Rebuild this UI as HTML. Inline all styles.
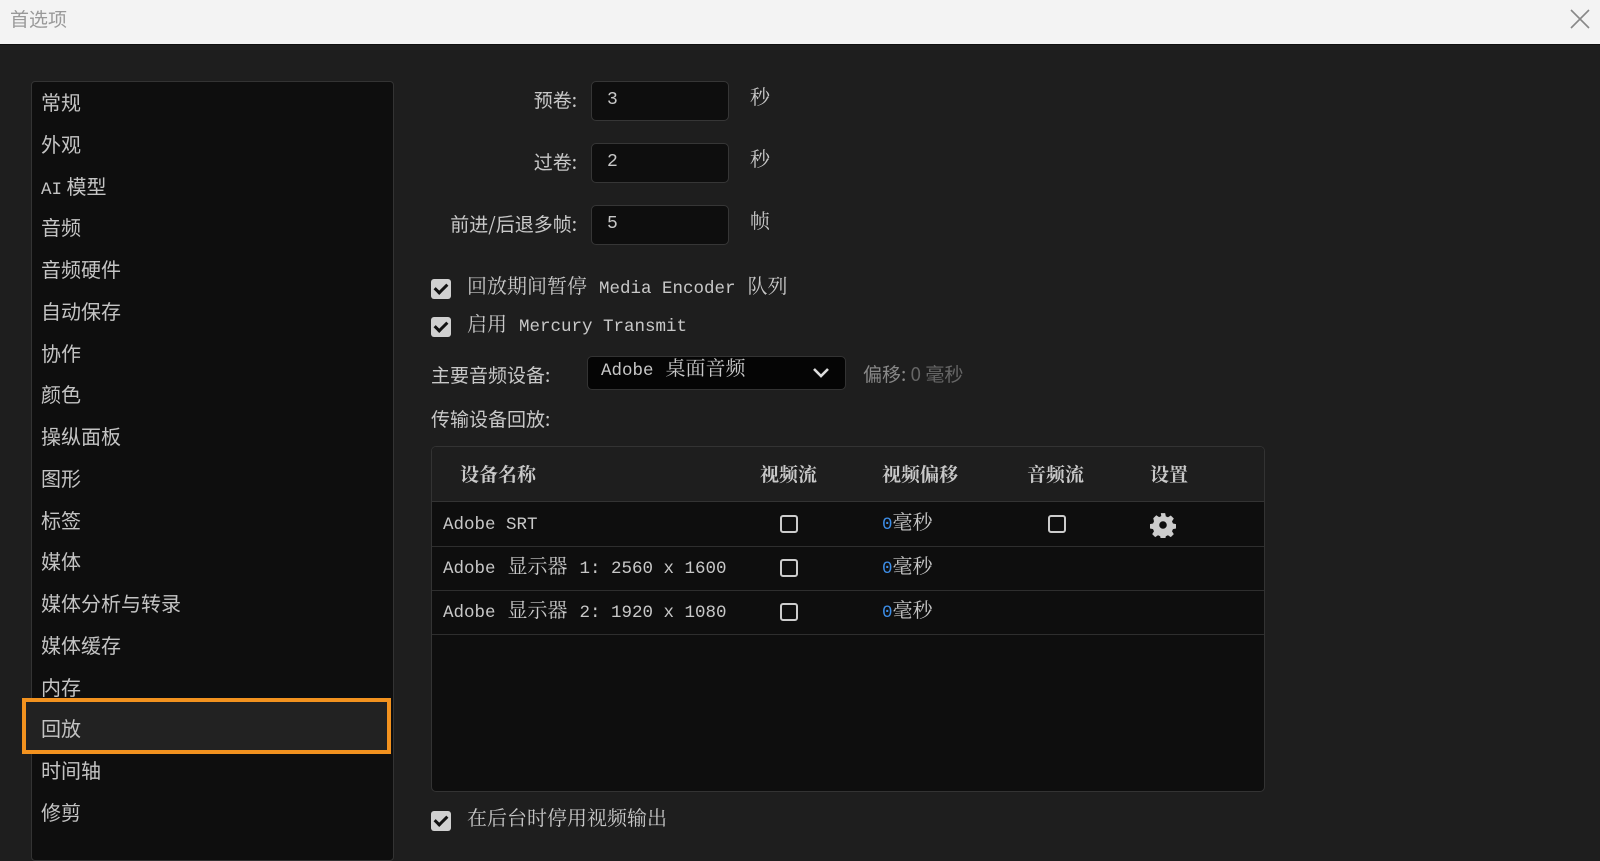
<!DOCTYPE html>
<html><head><meta charset="utf-8"><style>
*{margin:0;padding:0;box-sizing:border-box}
body{width:1600px;height:847px;overflow:hidden;background:#1e1e1e;font-family:"Liberation Mono","Noto Serif CJK SC","Noto Sans CJK SC",monospace;color:#c8c8c8;font-size:20px;position:relative}
.a{position:absolute;white-space:nowrap;line-height:1}
.m{font-size:17.5px}
#tb{position:absolute;left:0;top:0;width:1600px;height:45px;background:#f3f3f3;border-bottom:1px solid #111}
#tb .t{left:10px;top:9px;color:#999;font-family:"Noto Sans CJK SC",sans-serif;font-size:19px}
#panel{position:absolute;left:31px;top:81px;width:363px;height:780px;background:#0e0e0e;border:1px solid #333;border-radius:4px}
.it{position:absolute;left:41px;font-family:"Noto Sans CJK SC",sans-serif;font-size:20px;color:#c4c4c4;line-height:1}
#sel{position:absolute;left:22px;top:698px;width:369px;height:56px;border:4px solid #f2921f;background:#222}
.inp{position:absolute;left:591px;width:138px;height:40px;background:#0e0e0e;border:1px solid #363636;border-radius:5px}
.inp span{position:absolute;left:15px;top:8px;font-size:18px}
.lbl{position:absolute;right:1023px;font-family:"Noto Sans CJK SC",sans-serif;font-size:19px;line-height:1}
.cb{position:absolute;left:431px;width:20px;height:20px;background:#d0d0d0;border-radius:3px}
.cb::after{content:"";position:absolute;left:6px;top:2px;width:5px;height:10px;border:solid #111;border-width:0 3px 3px 0;transform:rotate(45deg)}
#tbl{position:absolute;left:431px;top:446px;width:834px;height:346px;background:#0e0e0e;border:1px solid #333;border-radius:5px;overflow:hidden}
#hd{position:absolute;left:0;top:0;width:100%;height:55px;background:#1e1e1e;border-bottom:1px solid #333}
.row{position:absolute;left:0;width:100%;height:44px;border-bottom:1px solid #2e2e2e}
.h{font-weight:bold;font-family:"Noto Serif CJK SC",serif;font-size:19px;color:#c8c8c8}
.box{position:absolute;width:18px;height:18px;border:2.5px solid #ccc;border-radius:3px}
.z{color:#3d8ee8}
</style></head><body>
<div id="tb"><div class="a t">首选项</div>
<svg style="position:absolute;left:1570px;top:9px" width="20" height="20"><path d="M1 1L19 19M19 1L1 19" stroke="#888" stroke-width="1.6"/></svg></div>

<div id="panel"></div>
<div id="sel"></div>
<div class="it" style="top:92px">常规</div>
<div class="it" style="top:134px">外观</div>
<div class="it" style="top:176px"><span class="m" style="font-family:'Liberation Mono'">AI</span> 模型</div>
<div class="it" style="top:217px">音频</div>
<div class="it" style="top:259px">音频硬件</div>
<div class="it" style="top:301px">自动保存</div>
<div class="it" style="top:343px">协作</div>
<div class="it" style="top:384px">颜色</div>
<div class="it" style="top:426px">操纵面板</div>
<div class="it" style="top:468px">图形</div>
<div class="it" style="top:510px">标签</div>
<div class="it" style="top:551px">媒体</div>
<div class="it" style="top:593px">媒体分析与转录</div>
<div class="it" style="top:635px">媒体缓存</div>
<div class="it" style="top:677px">内存</div>
<div class="it" style="top:718px">回放</div>
<div class="it" style="top:760px">时间轴</div>
<div class="it" style="top:802px">修剪</div>

<div class="lbl" style="top:90px">预卷:</div>
<div class="lbl" style="top:152px">过卷:</div>
<div class="lbl" style="top:214px">前进/后退多帧:</div>
<div class="inp" style="top:81px"><span>3</span></div>
<div class="inp" style="top:143px"><span>2</span></div>
<div class="inp" style="top:205px"><span>5</span></div>
<div class="a" style="left:750px;top:90px">秒</div>
<div class="a" style="left:750px;top:152px">秒</div>
<div class="a" style="left:750px;top:214px">帧</div>

<div class="cb" style="top:279px"></div>
<div class="a" style="left:467px;top:279px">回放期间暂停 <span class="m">Media Encoder</span> 队列</div>
<div class="cb" style="top:317px"></div>
<div class="a" style="left:467px;top:317px">启用 <span class="m">Mercury Transmit</span></div>

<div class="a" style="left:431px;top:365px;font-family:'Noto Sans CJK SC',sans-serif;font-size:19px">主要音频设备:</div>
<div style="position:absolute;left:587px;top:356px;width:259px;height:34px;background:#050505;border:1px solid #333;border-radius:5px"></div>
<div class="a" style="left:601px;top:361px"><span class="m">Adobe</span> 桌面音频</div>
<svg style="position:absolute;left:812px;top:366px" width="18" height="14"><path d="M2 3L9 10L16 3" stroke="#ddd" stroke-width="2.6" fill="none"/></svg>
<div class="a" style="left:863px;top:364px;color:#888;font-family:'Noto Sans CJK SC',sans-serif;font-size:19px">偏移: <span style="color:#666">0 毫秒</span></div>
<div class="a" style="left:431px;top:409px;font-family:'Noto Sans CJK SC',sans-serif;font-size:19px">传输设备回放:</div>

<div id="tbl">
<div id="hd">
<div class="a h" style="left:28px;top:17px">设备名称</div>
<div class="a h" style="left:328px;top:17px">视频流</div>
<div class="a h" style="left:450px;top:17px">视频偏移</div>
<div class="a h" style="left:595px;top:17px">音频流</div>
<div class="a h" style="left:718px;top:17px">设置</div>
</div>
<div class="row" style="top:56px">
<div class="a" style="left:11px;top:12px"><span class="m">Adobe SRT</span></div>
<div class="box" style="left:348px;top:12px"></div>
<div class="a" style="left:450px;top:12px"><span class="m z">0</span>毫秒</div>
<div class="box" style="left:616px;top:12px"></div>
<svg style="position:absolute;left:718px;top:9px" width="26" height="26" viewBox="0 0 24 24"><path fill="#ccc" d="M10 1h4l.6 3 2 .9 2.6-1.7 2.8 2.8-1.7 2.6.9 2 3 .6v4l-3 .6-.9 2 1.7 2.6-2.8 2.8-2.6-1.7-2 .9-.6 3h-4l-.6-3-2-.9-2.6 1.7-2.8-2.8 1.7-2.6-.9-2-3-.6v-4l3-.6.9-2L3 5.8 5.8 3l2.6 1.7 2-.9zM12 8.5a3.5 3.5 0 1 0 0 7 3.5 3.5 0 0 0 0-7z"/></svg>
</div>
<div class="row" style="top:100px">
<div class="a" style="left:11px;top:12px"><span class="m">Adobe</span> 显示器 <span class="m">1: 2560 x 1600</span></div>
<div class="box" style="left:348px;top:12px"></div>
<div class="a" style="left:450px;top:12px"><span class="m z">0</span>毫秒</div>
</div>
<div class="row" style="top:144px">
<div class="a" style="left:11px;top:12px"><span class="m">Adobe</span> 显示器 <span class="m">2: 1920 x 1080</span></div>
<div class="box" style="left:348px;top:12px"></div>
<div class="a" style="left:450px;top:12px"><span class="m z">0</span>毫秒</div>
</div>
</div>

<div class="cb" style="top:811px"></div>
<div class="a" style="left:467px;top:811px">在后台时停用视频输出</div>
</body></html>
